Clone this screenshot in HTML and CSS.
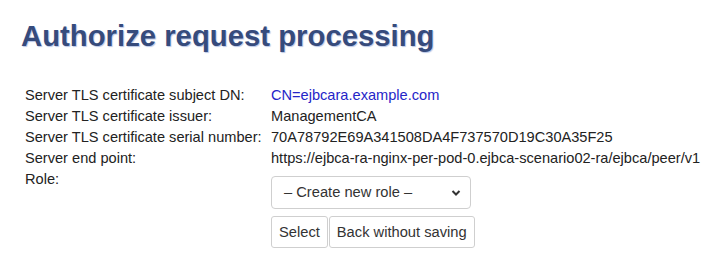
FILE: index.html
```html
<!DOCTYPE html>
<html>
<head>
<meta charset="utf-8">
<link rel="stylesheet" href="styles.css">
</head>
<body>
<div class="page">
  <h1 class="title">Authorize request processing</h1>
  <div class="info">
    <div class="label">Server TLS certificate subject DN:</div>
    <div class="value"><a class="dn" href="#">CN=ejbcara.example.com</a></div>
    <div class="label">Server TLS certificate issuer:</div>
    <div class="value">ManagementCA</div>
    <div class="label">Server TLS certificate serial number:</div>
    <div class="value">70A78792E69A341508DA4F737570D19C30A35F25</div>
    <div class="label">Server end point:</div>
    <div class="value">https://ejbca-ra-nginx-per-pod-0.ejbca-scenario02-ra/ejbca/peer/v1</div>
    <div class="label">Role:</div>
    <div class="value role">
      <div class="select-box">
        <span class="select-text">&#8211; Create new role &#8211;</span>
        <svg class="chev" width="10" height="8" viewBox="0 0 10 8"><path d="M1.5 2 L5 5.5 L8.5 2" fill="none" stroke="#333" stroke-width="2"/></svg>
      </div>
      <div class="buttons">
        <button class="btn">Select</button><button class="btn">Back without saving</button>
      </div>
    </div>
  </div>
</div>
</body>
</html>
```
FILE: styles.css
```css
html, body {
  margin: 0;
  padding: 0;
  background: #fff;
}
body {
  font-family: "Liberation Sans", Arial, sans-serif;
  font-size: 14.6px;
  color: #222;
}
.page {
  padding: 16px 0 0 21px;
}
.title {
  margin: 0;
  font-size: 29.3px;
  line-height: 40px;
  font-weight: bold;
  color: #364b7c;
  text-shadow: 1px 1px 1px #b9c6e6;
}
.info {
  display: grid;
  grid-template-columns: 246px auto;
  margin-top: 29px;
  margin-left: 4px;
  line-height: 21px;
}
.label, .value {
  white-space: nowrap;
}
.dn {
  color: #2525c8;
  text-decoration: none;
}
.role {
  padding-top: 7px;
}
.select-box {
  box-sizing: border-box;
  width: 200px;
  height: 33px;
  border: 1px solid #cfcfcf;
  border-radius: 4px;
  display: flex;
  align-items: center;
  justify-content: space-between;
  padding: 0 9px 0 12px;
  color: #333;
  background: #fff;
}
.select-text {
  font-size: 14.7px;
}
.chev {
  display: block;
}
.buttons {
  display: flex;
  margin-top: 7px;
  gap: 1px;
}
.btn {
  font-family: "Liberation Sans", Arial, sans-serif;
  font-size: 14.7px;
  color: #333;
  background: #fff;
  border: 1px solid #cfcfcf;
  border-radius: 3px;
  height: 32px;
  padding: 0 7px;
  margin: 0;
}
```
